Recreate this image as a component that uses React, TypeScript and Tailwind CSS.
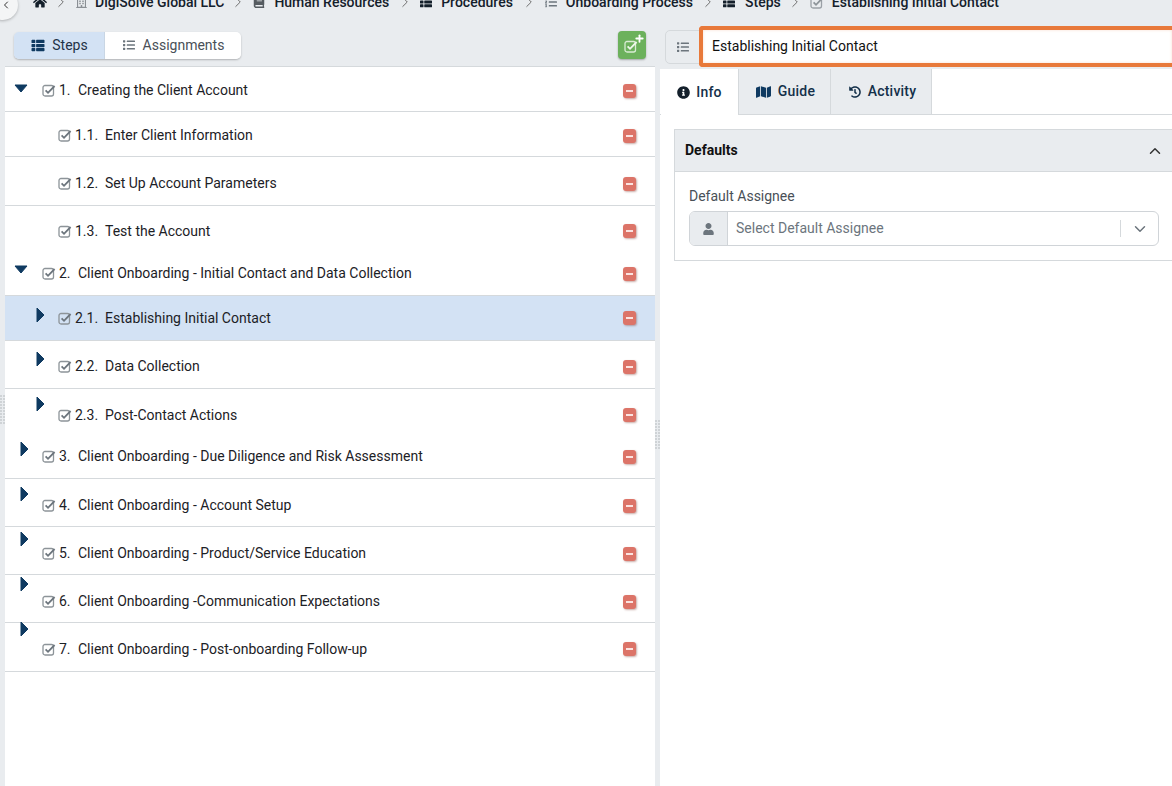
import {
  FaBook,
  FaHistory,
  FaHome,
  FaInfoCircle,
  FaList,
  FaListOl,
  FaMap,
  FaRegBuilding,
  FaThList,
  FaUser,
} from "react-icons/fa";
import { ChevronDown, ChevronLeft, ChevronRight, ChevronUp, Plus } from "lucide-react";

const crumbs = [
  { icon: FaRegBuilding, label: "DigiSolve Global LLC", sepCls: "ml-[5px]", iconCls: "ml-[6px] w-[11px] text-[#8a8f94]", textCls: "ml-[8px]" },
  { icon: FaBook, label: "Human Resources", sepCls: "ml-[5px]", iconCls: "ml-[6px] w-[12px] text-[#555b60]", textCls: "ml-[9px]" },
  { icon: FaThList, label: "Procedures", sepCls: "ml-[7px]", iconCls: "ml-[5px] w-[14px] text-[#14202b]", textCls: "ml-[8px]" },
  { icon: FaListOl, label: "Onboarding Process", sepCls: "ml-[7px]", iconCls: "ml-[6px] w-[14px] text-[#6c757d]", textCls: "ml-[8px]" },
  { icon: FaThList, label: "Steps", sepCls: "ml-[6px]", iconCls: "ml-[5px] w-[14px] text-[#14202b]", textCls: "ml-[9px]" },
  { icon: null, label: "Establishing Initial Contact", sepCls: "ml-[5px]", iconCls: "ml-[6px]", textCls: "ml-[8px]" },
];

const steps = [
  { num: "1.", title: "Creating the Client Account", level: 0, caret: "down", rowCls: "h-[45px] border-b", caretCls: "mt-[17px]", textCls: "mt-[3px]" },
  { num: "1.1.", title: "Enter Client Information", level: 1, caret: "", rowCls: "h-[45px] border-b", caretCls: "", textCls: "mt-[3px]" },
  { num: "1.2.", title: "Set Up Account Parameters", level: 1, caret: "", rowCls: "h-[49px] border-b", caretCls: "", textCls: "mt-[5px]" },
  { num: "1.3.", title: "Test the Account", level: 1, caret: "", rowCls: "h-[44px]", caretCls: "", textCls: "mt-[6px]" },
  { num: "2.", title: "Client Onboarding - Initial Contact and Data Collection", level: 0, caret: "down", rowCls: "h-[46px] border-b", caretCls: "mt-[15px]", textCls: "mt-[2px]" },
  { num: "2.1.", title: "Establishing Initial Contact", level: 1, caret: "right", rowCls: "h-[45px] border-b bg-[#d3e2f4]", caretCls: "mt-[11px]", textCls: "" },
  { num: "2.2.", title: "Data Collection", level: 1, caret: "right", rowCls: "h-[48px] border-b", caretCls: "mt-[10px]", textCls: "mt-[4px]" },
  { num: "2.3.", title: "Post-Contact Actions", level: 1, caret: "right", rowCls: "h-[44px]", caretCls: "mt-[7px]", textCls: "mt-[8px]" },
  { num: "3.", title: "Client Onboarding - Due Diligence and Risk Assessment", level: 0, caret: "right", rowCls: "h-[46px] border-b", caretCls: "mt-[8px]", textCls: "mt-[2px]" },
  { num: "4.", title: "Client Onboarding - Account Setup", level: 0, caret: "right", rowCls: "h-[48px] border-b", caretCls: "mt-[7px]", textCls: "mt-[6px]" },
  { num: "5.", title: "Client Onboarding - Product/Service Education", level: 0, caret: "right", rowCls: "h-[48px] border-b", caretCls: "mt-[4px]", textCls: "mt-[6px]" },
  { num: "6.", title: "Client Onboarding -Communication Expectations", level: 0, caret: "right", rowCls: "h-[48px] border-b", caretCls: "mt-[1px]", textCls: "mt-[6px]" },
  { num: "7.", title: "Client Onboarding - Post-onboarding Follow-up", level: 0, caret: "right", rowCls: "h-[49px] border-b", caretCls: "-mt-[2px]", textCls: "mt-[4px]" },
];

function Caret({ dir }: { dir: string }) {
  if (dir === "down") {
    return (
      <svg width="14" height="9" viewBox="0 0 14 9" className="shrink-0">
        <path d="M1 1h12L7 8z" fill="#0f3a61" stroke="#0f3a61" strokeLinejoin="round" />
      </svg>
    );
  }
  return (
    <svg width="9" height="16" viewBox="0 0 9 16" className="shrink-0">
      <path d="M1 1l7 7-7 7z" fill="#0f3a61" stroke="#0f3a61" strokeLinejoin="round" />
    </svg>
  );
}

function CheckBoxIcon({ color = "#8d9499", tick = "#6c757d" }: { color?: string; tick?: string }) {
  return (
    <svg width="14" height="13" viewBox="0 0 14 13" className="shrink-0">
      <rect x="1" y="1.5" width="10.5" height="10.5" rx="2" fill="none" stroke={color} strokeWidth="1.3" />
      <path d="M3.6 6.4l2.4 2.4L12.6 2" fill="none" stroke={tick} strokeWidth="1.8" />
    </svg>
  );
}

function RemoveButton() {
  return (
    <div className="flex h-[14px] w-[13px] items-center justify-center rounded-[3px] bg-[#dc7468] shadow-[1px_1px_2px_rgba(120,50,40,0.4)]">
      <div className="h-[2px] w-[7px] bg-[#fbe3e0]" />
    </div>
  );
}

function GripDots() {
  return (
    <div className="grid w-[5px] grid-cols-2 gap-[1px]">
      {Array.from({ length: 20 }).map((_, i) => (
        <div key={i} className="h-[2px] w-[2px] bg-[#cfd3d6]" />
      ))}
    </div>
  );
}

export default function App() {
  return (
    <div className="flex h-[786px] w-full flex-col overflow-hidden bg-[#e9ecef] font-['Roboto',sans-serif] text-[14px] text-[#212529]">
      {/* Breadcrumb */}
      <div className="relative h-[24px] shrink-0 overflow-hidden">
        <div className="absolute -left-[12px] -top-[10px] flex h-[30px] w-[30px] items-center justify-end rounded-full bg-[#f4f5f6] pr-[6px] shadow-[0_1px_3px_rgba(0,0,0,0.25)]">
          <ChevronLeft className="h-3 w-3 text-[#333]" />
        </div>
        <div className="-mt-[10px] flex h-[24px] items-center pl-[33px] font-medium whitespace-nowrap text-[#14202b]">
          <FaHome className="h-[14px] w-[14px] text-[#14202b]" />
          {crumbs.map((c) => {
            const Icon = c.icon;
            return (
              <div key={c.label} className="flex items-center">
                <ChevronRight className={`${c.sepCls} h-[18px] w-[18px] text-[#666]`} strokeWidth={1.25} />
                {Icon ? (
                  <Icon className={`${c.iconCls} h-[12px]`} />
                ) : (
                  <span className={c.iconCls}>
                    <CheckBoxIcon color="#9aa0a6" tick="#8d9499" />
                  </span>
                )}
                <span className={c.textCls}>{c.label}</span>
              </div>
            );
          })}
        </div>
      </div>

      <div className="flex min-h-0 flex-1">
        {/* Left gutter */}
        <div className="flex w-[5px] shrink-0 flex-col justify-start pt-[371px]">
          <GripDots />
        </div>

        {/* Steps panel */}
        <div className="flex w-[650px] shrink-0 flex-col bg-white">
          <div className="flex h-[43px] shrink-0 items-center justify-between border-b border-[#d5d9dc] bg-[#e9ecef] pr-[9px] pl-[9px]">
            <div className="flex h-[27px] overflow-hidden rounded-[5px] shadow-[0_1px_2px_rgba(0,0,0,0.25)]">
              <div className="flex w-[91px] items-center justify-center gap-[6px] border-r border-[#c9d6e4] bg-[#d3e2f4] text-[#1f3347]">
                <FaThList className="h-[13px] w-[16px] text-[#0f3a61]" />
                Steps
              </div>
              <div className="flex w-[136px] items-center justify-center gap-[7px] bg-white text-[#495057]">
                <FaList className="h-[12px] w-[14px] text-[#6c757d]" />
                Assignments
              </div>
            </div>
            <div className="relative flex h-[28px] w-[28px] items-center justify-center rounded-[4px] bg-[#6cb15c] pt-[3px] pr-[3px] shadow-[0_1px_2px_rgba(0,0,0,0.3)]">
              <CheckBoxIcon color="#d9ecd4" tick="#eef7eb" />
              <Plus className="absolute top-[2px] right-[1px] h-[11px] w-[11px] text-white" strokeWidth={4} />
            </div>
          </div>

          <div>
            {steps.map((s) => (
              <div key={s.num} className={`${s.rowCls} flex border-[#d5d9dc]`}>
                <div className={`flex shrink-0 items-start ${s.level === 0 ? "w-[37px]" : "w-[53px]"}`}>
                  {s.caret === "down" && (
                    <div className={`ml-[9px] ${s.caretCls}`}>
                      <Caret dir="down" />
                    </div>
                  )}
                  {s.caret === "right" && (
                    <div className={`${s.level === 0 ? "ml-[15px]" : "ml-[31px]"} ${s.caretCls}`}>
                      <Caret dir="right" />
                    </div>
                  )}
                </div>
                <div className={`flex min-w-0 flex-1 items-center whitespace-nowrap text-[#1c2126] ${s.textCls}`}>
                  <CheckBoxIcon />
                  <span className={`ml-[3px] shrink-0 ${s.level === 0 ? "w-[19px]" : "w-[30px]"}`}>{s.num}</span>
                  <span>{s.title}</span>
                  <div className="mr-[19px] ml-auto">
                    <RemoveButton />
                  </div>
                </div>
              </div>
            ))}
          </div>
        </div>

        {/* Splitter */}
        <div className="flex w-[5px] shrink-0 flex-col pt-[396px]">
          <GripDots />
        </div>

        {/* Detail panel */}
        <div className="flex min-w-0 flex-1 flex-col bg-white">
          <div className="flex h-[45px] shrink-0 items-center bg-[#e9ecef] pl-[5px]">
            <div className="flex h-[34px] w-[40px] shrink-0 items-center justify-center rounded-l-[5px] border border-[#d5d9dc] pr-[4px]">
              <FaList className="h-[12px] w-[14px] text-[#6c757d]" />
            </div>
            <div className="-ml-[6px] flex h-[41px] flex-1 items-center rounded-l-[4px] border-[4px] border-r-0 border-[#e8793a] bg-white pl-[9px] text-[#111] shadow-[inset_0_0_3px_rgba(232,121,58,0.25)]">
              Establishing Initial Contact
            </div>
          </div>

          <div className="flex h-[46px] shrink-0 border-b border-[#d5d9dc] pl-[1px] font-medium tracking-[0.2px] text-[#14304a]">
            <div className="-mb-[1px] flex w-[78px] items-center justify-center gap-[6px] border-r border-[#d5d9dc] bg-white">
              <FaInfoCircle className="h-[13px] w-[13px] text-[#14202b]" />
              Info
            </div>
            <div className="flex w-[92px] items-center justify-center gap-[7px] border-r border-[#d5d9dc] bg-[#e9ecef] pl-[2px]">
              <FaMap className="h-[14px] w-[15px] text-[#0f3a61]" />
              Guide
            </div>
            <div className="flex w-[101px] items-center justify-center gap-[7px] border-r border-[#d5d9dc] bg-[#e9ecef] pl-[3px]">
              <FaHistory className="h-[12px] w-[12px] text-[#14304a]" />
              Activity
            </div>
          </div>

          <div className="pt-[14px] pl-[14px]">
            <div className="border-y border-l border-[#d5d9dc]">
              <div className="flex h-[42px] items-center justify-between border-b border-[#d5d9dc] bg-[#e9ecef] pr-[8px] pl-[10px]">
                <span className="font-bold text-[#111]">Defaults</span>
                <ChevronUp className="h-[18px] w-[18px] text-[#333]" />
              </div>
              <div className="pt-[15px] pr-[13px] pb-[14px] pl-[14px]">
                <div className="mb-[6px] h-[18px] leading-[18px] text-[#495057]">Default Assignee</div>
                <div className="flex h-[35px] overflow-hidden rounded-[6px] border border-[#d0d4d8] bg-white">
                  <div className="flex w-[38px] shrink-0 items-center justify-center border-r border-[#d0d4d8] bg-[#e9ecef]">
                    <FaUser className="h-[12px] w-[11px] text-[#6c757d]" />
                  </div>
                  <div className="flex-1 self-center pl-[8px] text-[#6c757d]">Select Default Assignee</div>
                  <div className="my-[8px] w-px bg-[#d5d9dc]" />
                  <div className="flex w-[37px] items-center justify-center">
                    <ChevronDown className="h-[18px] w-[18px] text-[#6c757d]" />
                  </div>
                </div>
              </div>
            </div>
          </div>
        </div>
      </div>
    </div>
  );
}
